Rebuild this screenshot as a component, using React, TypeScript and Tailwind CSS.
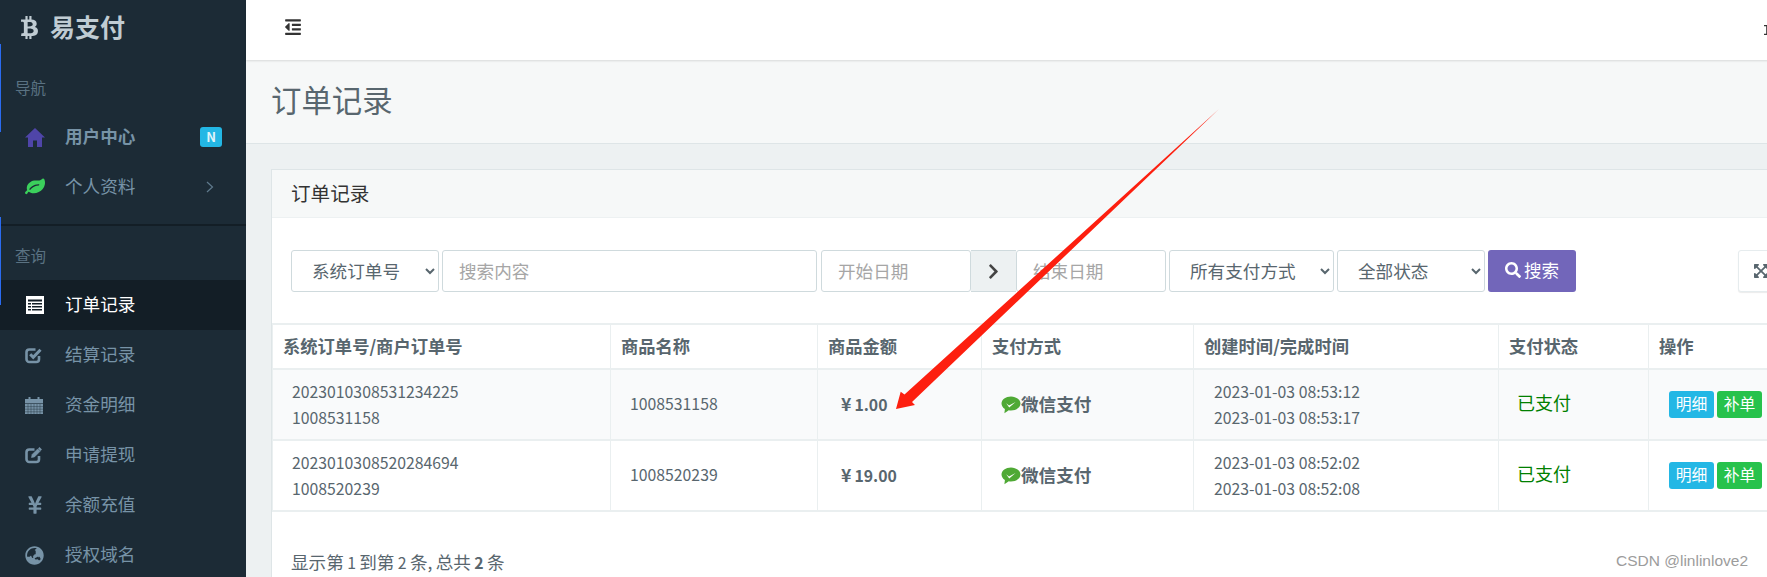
import React from "react";
import { FaBtc, FaChevronRight, FaYenSign, FaGlobeAsia, FaOutdent, FaSearch, FaExpandArrowsAlt } from "react-icons/fa";

function Num({ children, bold }: { children: React.ReactNode; bold?: boolean }) {
  return <span className={bold ? "text-[15.8px] font-bold" : "text-[15.8px]"}>{children}</span>;
}

function HomeIcon() {
  return (
    <svg viewBox="0 0 20 19" className="h-[19px] w-[20px] fill-[#4f45a8]">
      <path d="M10 0L20 9.500H17V19H12V12.500H8V19H3V9.500H0z" />
    </svg>
  );
}

function LeafIcon() {
  return (
    <svg viewBox="0 0 1792 1792" className="h-[20px] w-[20px] fill-[#3bd05c]">
      <path d="M1280 704q0-26-19-45t-45-19q-172 0-318 49.5t-259.5 134-235.5 219.5q-19 21-19 45 0 26 19 45t45 19q24 0 45-19 27-24 74-71t67-66q137-124 268.5-176t313.5-52q26 0 45-19t19-45zm512-198q0 95-20 193-46 224-184.5 383t-357.5 268q-214 108-438 108-148 0-286-47-15-5-88-42t-96-37q-16 0-39.5 32t-45 70-52.5 70-60 32q-30 0-51-11t-31-24-27-42q-2-4-6-11t-5.5-10-3-9.5-1.5-13.5q0-35 31-73.5t68-65.5 68-56 31-48q0-4-14-38t-16-44q-9-51-9-104 0-115 43.5-220t119-184.5 170.5-139 204-95.5q55-18 145-25.5t179.5-9 178.5-6 163.5-24 113.5-56.5l29.5-29.5 29.5-28 27-20 36.5-16 43.5-4.5q39 0 70.5 46t47.5 112 24 124 8 96z" />
    </svg>
  );
}

function ListIcon() {
  return (
    <svg viewBox="0 0 18 18" className="ml-[1px] h-[18px] w-[18px]">
      <rect width="18" height="18" fill="#fff" />
      <path d="M2 3.500h14v2H2zM2 7h3v1.500H2zM6 7h10v1.500H6zM2 10h3v1.500H2zM6 10h10v1.500H6zM2 13h3v1.500H2zM6 13h10v1.500H6z" fill="#131e26" />
    </svg>
  );
}

function CheckSquareIcon() {
  return (
    <svg viewBox="0 0 18 18" className="h-[18px] w-[18px] fill-none stroke-[#7793a7]">
      <path d="M14 10v3.200a2.800 2.800 0 0 1-2.800 2.800H4.300A2.800 2.800 0 0 1 1.500 13.200V6.300a2.800 2.800 0 0 1 2.800-2.800h6.200" strokeWidth="2.600" />
      <path d="M5.200 8.300l3 3 7.300-7.600" strokeWidth="3" />
    </svg>
  );
}

function CalendarIcon() {
  return (
    <svg viewBox="0 0 18 18" className="h-[18px] w-[18px]">
      <path d="M0 3h3.500V1h2v2h7V1h2v2H18v4H0z" fill="#7793a7" />
      <rect y="7.600" width="18" height="10.400" fill="#7793a7" />
      <path d="M3 8v10M6 8v10M9 8v10M12 8v10M15 8v10M0 10.600h18M0 13.200h18M0 15.800h18" stroke="#1c2b36" strokeWidth="0.4" />
    </svg>
  );
}

function EditIcon() {
  return (
    <svg viewBox="0 0 18 18" className="h-[18px] w-[18px] fill-none stroke-[#7793a7]">
      <path d="M14 10v3.200a2.800 2.800 0 0 1-2.800 2.800H4.300A2.800 2.800 0 0 1 1.500 13.200V6.300a2.800 2.800 0 0 1 2.800-2.800h5.200" strokeWidth="2.600" />
      <path d="M6.500 11.500l.6-3 5.600-5.600 2.400 2.400-5.600 5.600z" fill="#7793a7" strokeWidth="0.600" />
      <path d="M13.800 1.800l2.400 2.400" strokeWidth="2" />
    </svg>
  );
}

function ThinChevron() {
  return (
    <svg viewBox="0 0 8 12" className="h-[12px] w-[8px] fill-none stroke-[#5f7a8d]">
      <path d="M1 1l5.500 5L1 11" strokeWidth="1.200" />
    </svg>
  );
}

function NavItem({
  icon, label, active, bold, right,
}: { icon: React.ReactNode; label: string; active?: boolean; bold?: boolean; right?: React.ReactNode }) {
  return (
    <div className={`flex h-[50px] items-center pl-[25px] pr-[25px] ${active ? "bg-[#131e26] text-white" : "text-[#7793a7]"}`}>
      <span className="flex w-[40px] shrink-0 items-center">{icon}</span>
      <span className={`pb-[2px] text-[17.6px] ${bold ? "font-bold" : ""}`}>{label}</span>
      <span className="ml-auto flex items-center">{right}</span>
    </div>
  );
}

function WeChat() {
  return (
    <svg viewBox="0 0 20 18" className="-ml-[1px] mt-[3px] h-[18px] w-[20px] shrink-0">
      <path d="M10 .5C4.800 .5 .5 3.600 .5 7.600c0 2.200 1.300 4.200 3.400 5.500l-.5 4.200 4.400-3c.7 .1 1.400 .2 2.200 .2 5.200 0 9.500-3.100 9.500-6.900S15.200 .5 10 .5z" fill="#4fa935" />
      <path d="M5.200 7.200l2.800 2.400 6.600-3.600-6.400 5.600z" fill="#fff" />
    </svg>
  );
}

const inputCls =
  "h-full rounded-[3px] border border-[#cfdadd] bg-white pb-[2px] pl-[16px] text-[17.6px] text-[#58666e] outline-none placeholder:text-[#a6a6a6]";
const selectCls =
  "h-full rounded-[3px] border border-[#cfdadd] bg-white pb-[2px] pl-[16px] text-[17.6px] text-[#58666e] outline-none";

const rows = [
  { a: "2023010308531234225", b: "1008531158", amt: "1.00", t1: "2023-01-03 08:53:12", t2: "2023-01-03 08:53:17", bg: "bg-[#f9fafb]" },
  { a: "2023010308520284694", b: "1008520239", amt: "19.00", t1: "2023-01-03 08:52:02", t2: "2023-01-03 08:52:08", bg: "bg-white" },
];

export default function App() {
  return (
    <div className="relative flex h-[577px] w-[1767px] overflow-hidden bg-[#edf1f2] font-['Noto_Sans_CJK_SC',sans-serif] text-[#58666e]">
      {/* sidebar */}
      <aside className="relative w-[246px] shrink-0 bg-[#1c2b36]">
        <div className="flex h-[60px] items-center pb-[6px] pl-[18px] text-[#c0ccd3]">
          <FaBtc className="mr-[9px] text-[23px]" />
          <span className="text-[25px] font-bold">易支付</span>
        </div>
        <div className="flex h-[52px] items-end pb-[13px] pl-[15px] text-[15.5px] leading-[24px] text-[#5a7282]">导航</div>
        <NavItem
          bold
          icon={<HomeIcon />}
          label="用户中心"
          right={<span className="-mr-[1px] flex h-[20px] w-[22px] items-center justify-center rounded-[3px] bg-[#23b7e5] text-[13px] font-bold text-[#dff4fa]">N</span>}
        />
        <NavItem icon={<LeafIcon />} label="个人资料" right={<span className="mr-[7px]"><ThinChevron /></span>} />
        <div className="mt-[12px] h-[2px] bg-[#131e26]" />
        <div className="flex h-[54px] items-end pb-[13px] pl-[15px] text-[15.5px] leading-[24px] text-[#5a7282]">查询</div>
        <NavItem active icon={<ListIcon />} label="订单记录" />
        <NavItem icon={<CheckSquareIcon />} label="结算记录" />
        <NavItem icon={<CalendarIcon />} label="资金明细" />
        <NavItem icon={<EditIcon />} label="申请提现" />
        <NavItem icon={<FaYenSign className="text-[20px]" />} label="余额充值" />
        <NavItem icon={<FaGlobeAsia className="text-[19px]" />} label="授权域名" />
        <div className="absolute left-0 top-[44px] h-[88px] w-px bg-[#2a6bf0]" />
        <div className="absolute left-0 top-[217px] h-[88px] w-px bg-[#2a6bf0]" />
      </aside>

      {/* main */}
      <main className="w-[1640px] shrink-0">
        <header className="relative z-10 flex h-[60px] items-center bg-white pb-[6px] pl-[38px] shadow-[0_1px_2px_rgba(0,0,0,0.12)]">
          <FaOutdent className="text-[18px] text-[#333]" />
          <svg viewBox="0 0 12 10" className="ml-[1462px] mt-[6px] h-[10px] w-[12px]">
            <path d="M0 0h8v1.200H0zM0 8.800h8V10H0zM2.200 0h1.600v10H2.200z" fill="#333" />
          </svg>
        </header>
        <div className="flex h-[84px] items-center border-b border-[#dee5e7] bg-[#f6f8f8] pb-[4px] pl-[25px] text-[30.4px] text-[#58666e]">
          订单记录
        </div>

        <section className="ml-[25px] mt-[25px] w-[1600px] border border-[#dee5e7] bg-white">
          <div className="flex h-[48px] items-center border-b border-[#edf1f2] bg-[#f6f8f8] pb-[2px] pl-[19px] text-[19.6px] text-[#333]">
            订单记录
          </div>

          <div className="ml-[19px] mt-[32px] flex h-[42px] items-center">
            <select className={`${selectCls} w-[148px]`} defaultValue="a"><option value="a">系统订单号</option></select>
            <input className={`${inputCls} ml-[3px] w-[375px]`} placeholder="搜索内容" />
            <input className={`${inputCls} ml-[4px] w-[150px]`} placeholder="开始日期" />
            <div className="flex h-full w-[45px] items-center justify-center border-y border-[#cfdadd] bg-[#edf1f2] text-[#444]">
              <FaChevronRight className="text-[17px]" />
            </div>
            <input className={`${inputCls} w-[150px]`} placeholder="结束日期" />
            <select className={`${selectCls} ml-[3px] w-[165px]`} defaultValue="a"><option value="a">所有支付方式</option></select>
            <select className={`${selectCls} ml-[3px] w-[148px]`} defaultValue="a"><option value="a">全部状态</option></select>
            <button className="ml-[3px] flex h-full w-[88px] items-center justify-center gap-[3px] rounded-[3px] bg-[#7266ba] pb-[2px] text-[17.6px] text-white">
              <FaSearch className="text-[16px]" />搜索
            </button>
            <button className="ml-[162px] flex h-full w-[60px] items-center rounded-[3px] border border-[#e6ecee] bg-white pl-[14px] text-[#58666e] shadow-[0_1px_1px_rgba(0,0,0,0.08)]">
              <FaExpandArrowsAlt className="text-[16px]" />
            </button>
          </div>

          <div className="mt-[31px]">
            <table className="w-[1560px] table-fixed border-collapse text-[17.6px]">
              <colgroup>
                <col className="w-[338px]" />
                <col className="w-[207px]" />
                <col className="w-[164px]" />
                <col className="w-[212px]" />
                <col className="w-[305px]" />
                <col className="w-[150px]" />
                <col />
              </colgroup>
              <thead>
                <tr className="h-[45px] border-y-2 border-[#eaeff0]">
                  {["系统订单号/商户订单号", "商品名称", "商品金额", "支付方式", "创建时间/完成时间", "支付状态", "操作"].map((h) => (
                    <th key={h} className="border-x border-[#eaeff0] px-[10px] pb-[2px] text-left text-[17.3px] font-bold text-[#58666e]">{h}</th>
                  ))}
                </tr>
              </thead>
              <tbody>
                {rows.map((r) => (
                  <tr key={r.a} className={`h-[71px] border-b-2 border-[#eaeff0] ${r.bg}`}>
                    <td className="border-x border-[#eaeff0] pb-[2px] pl-[19px] leading-[25px]"><Num>{r.a}</Num><br /><Num>{r.b}</Num></td>
                    <td className="border-x border-[#eaeff0] pb-[2px] pl-[19px]"><Num>{r.b}</Num></td>
                    <td className="border-x border-[#eaeff0] pb-[1px] pl-[23px] font-bold">
                      <span className="mr-[3px]">¥</span><Num bold>{r.amt}</Num>
                    </td>
                    <td className="border-x border-[#eaeff0] pb-[1px] pl-[20px]">
                      <div className="flex items-center font-bold"><WeChat />微信支付</div>
                    </td>
                    <td className="border-x border-[#eaeff0] pb-[2px] pl-[20px] leading-[25px]"><Num>{r.t1}</Num><br /><Num>{r.t2}</Num></td>
                    <td className="border-x border-[#eaeff0] pb-[4px] pl-[18px] text-[18px] text-[#008000]">已支付</td>
                    <td className="border-x border-[#eaeff0] pl-[20px]">
                      <div className="flex gap-[3px]">
                        <span className="flex h-[27px] w-[45px] items-center justify-center rounded-[3px] bg-[#23b7e5] pb-[2px] text-[15.8px] text-white">明细</span>
                        <span className="flex h-[27px] w-[45px] items-center justify-center rounded-[3px] bg-[#27c24c] pb-[2px] text-[15.8px] text-white">补单</span>
                      </div>
                    </td>
                  </tr>
                ))}
              </tbody>
            </table>
          </div>

          <div className="ml-[19px] mt-[37px] h-[40px] text-[17.6px] leading-[26px] [word-spacing:-0.6px]">
            显示第 <Num>1</Num> 到第 <Num>2</Num> 条, 总共 <Num bold>2</Num> 条
          </div>
        </section>
      </main>

      {/* annotation arrow */}
      <svg className="pointer-events-none absolute left-0 top-0 z-20 h-[577px] w-[1767px]" viewBox="0 0 1767 577">
        <polygon points="1219,109 912,402 915,405 896,409 900.7,391.700 904.500,394.500" fill="#fd1f0f" />
      </svg>
      <div className="pointer-events-none absolute left-[1616px] top-[551px] z-20 font-['Liberation_Sans',sans-serif] text-[15.5px] leading-[20px] text-[#9c9c9c]">
        CSDN @linlinlove2
      </div>
    </div>
  );
}
